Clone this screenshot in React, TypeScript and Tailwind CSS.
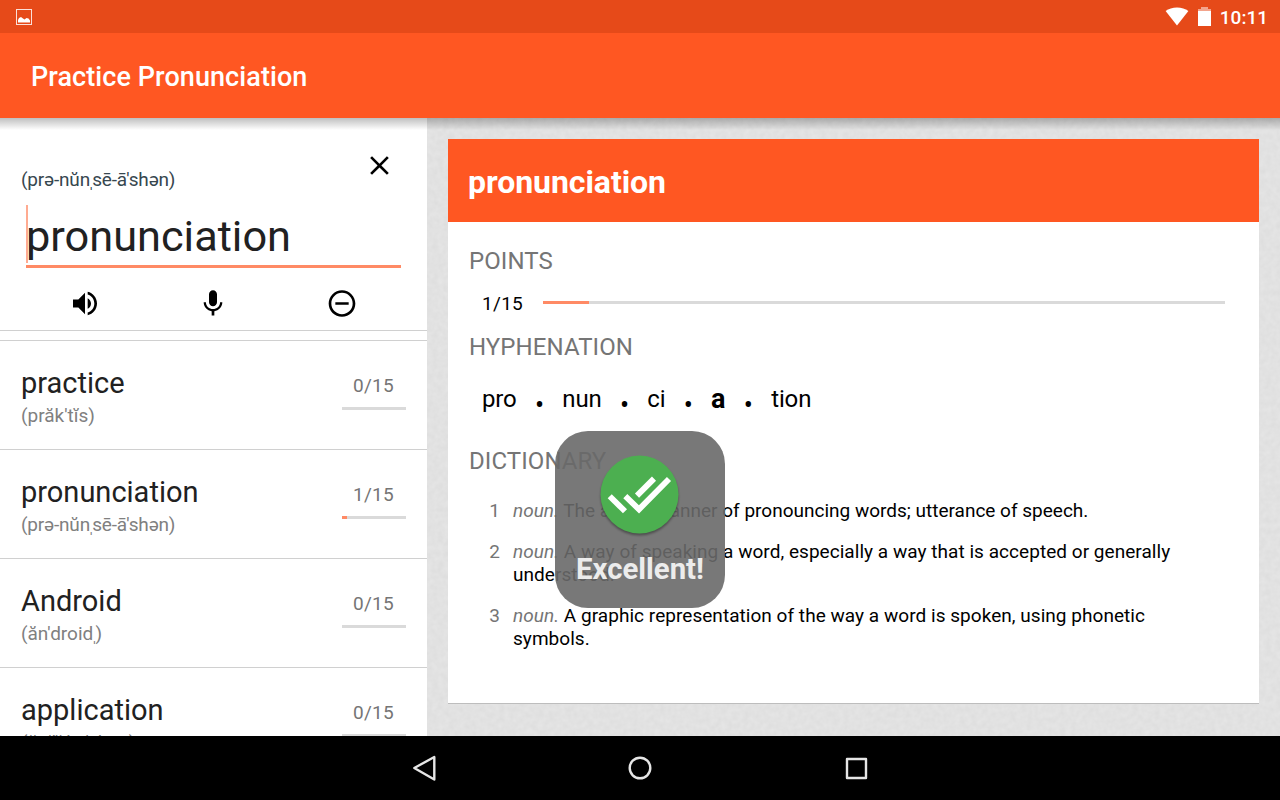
import React from "react";

type Word = { word: string; phonetic: string; points: number };

const MAX_POINTS = 15;

const words: Word[] = [
  { word: "practice", phonetic: "(prăk'tĭs)", points: 0 },
  { word: "pronunciation", phonetic: "(prə-nŭnˌsē-ā'shən)", points: 1 },
  { word: "Android", phonetic: "(ăn'droidˌ)", points: 0 },
  { word: "application", phonetic: "(ăp'lĭ-kā'shən)", points: 0 },
];

const syllables = [
  { text: "pro", stressed: false },
  { text: "nun", stressed: false },
  { text: "ci", stressed: false },
  { text: "a", stressed: true },
  { text: "tion", stressed: false },
];

const definitions = [
  "The act or manner of pronouncing words; utterance of speech.",
  "A way of speaking a word, especially a way that is accepted or generally understood.",
  "A graphic representation of the way a word is spoken, using phonetic symbols.",
];

function MaterialIcon({ d }: { d: string }) {
  return (
    <svg viewBox="0 0 24 24" className="h-8 w-8" fill="#000">
      <path d={d} />
    </svg>
  );
}

// The secondary stress mark hangs tightly under the letter before it.
function Phonetic({ text }: { text: string }) {
  const [before, after] = text.split("ˌ");
  if (after === undefined) return <>{before}</>;
  return (
    <span className={after.length > 3 ? "tracking-[-0.17px]" : ""}>
      {before}
      <span className="-ml-[2px] -mr-[2px]">ˌ</span>
      {after}
    </span>
  );
}

function StatusBar() {
  return (
    <div className="flex h-[33px] items-center bg-[#e64a19] pl-4 pr-3 text-white">
      <svg width="16" height="16" viewBox="0 0 16 16">
        <rect x="0.5" y="0.5" width="15" height="15" fill="none" stroke="#fbe0d8" />
        <path d="M2 13.500V11l1-2 2-1 2 1.500 1.500 1 2-1.500 2 .5 1.500 2v2z" fill="#fff" />
      </svg>
      <svg className="ml-auto" width="24" height="20" viewBox="0 0 24 20">
        <path d="M12 18.500.6 4.100C3.700 1.700 7.500.5 12 .5s8.300 1.200 11.400 3.600z" fill="#fff" />
      </svg>
      <svg className="ml-[9px]" width="13" height="19" viewBox="0 0 13 19">
        <path d="M3 0h7v2h3v2H0V2h3z" fill="#f3a48c" />
        <path d="M0 4h13v15H0z" fill="#fff" />
      </svg>
      <span className="ml-[9px] pt-[2px] text-[19px] font-medium leading-6">10:11</span>
    </div>
  );
}

function Header() {
  return (
    <header className="relative z-10 shrink-0 bg-[#ff5722]">
      <StatusBar />
      <div className="flex h-[85px] items-center pl-[31px] pt-[3px]">
        <h1 className="text-[27px] font-medium leading-8 tracking-[0.08px] text-white">Practice Pronunciation</h1>
      </div>
      <div className="absolute inset-x-0 top-full h-3 bg-linear-to-b from-black/25 to-transparent" />
    </header>
  );
}

function Editor() {
  return (
    <section className="h-[213px] shrink-0 border-b border-[#d0d0d0] px-[21px]">
      <div className="flex justify-between pt-[31px] pr-[10px]">
        <p className="pt-[19px] text-[19px] leading-6 text-[#37474f]">
          <Phonetic text="(prə-nŭnˌsē-ā'shən)" />
        </p>
        <svg viewBox="0.4 -0.4 24 24" className="h-8 w-8" fill="#000">
          <path d="M19 6.410 17.590 5 12 10.590 6.410 5 5 6.410 10.590 12 5 17.590 6.410 19 12 13.410 17.590 19 19 17.590 13.410 12z" />
        </svg>
      </div>
      <div className="ml-[5px] mt-[13px] flex h-[63px] w-[375px] border-b-3 border-[#ff8a65]">
        <div className="h-[58px] w-[2px] bg-[#ffab91]" />
        <div className="-ml-[2px] pt-px text-[43.300px] leading-[62px] text-[#212121]">pronunciation</div>
      </div>
      <div className="mt-[19px] grid w-[385px] translate-y-[0.5px] grid-cols-3 justify-items-center">
        <MaterialIcon d="M3 9v6h4l5 5V4L7 9H3zm13.500 3c0-1.770-1.020-3.290-2.500-4.030v8.050c1.480-.73 2.500-2.250 2.500-4.020zM14 3.230v2.060c2.890.86 5 3.540 5 6.710s-2.110 5.850-5 6.710v2.060c4.010-.91 7-4.490 7-8.770s-2.990-7.860-7-8.770z" />
        <MaterialIcon d="M12 14c1.660 0 2.990-1.340 2.990-3L15 5c0-1.660-1.340-3-3-3S9 3.340 9 5v6c0 1.660 1.340 3 3 3zm5.300-3c0 3-2.540 5.100-5.300 5.100S6.700 14 6.700 11H5c0 3.410 2.720 6.230 6 6.720V21h2v-3.280c3.280-.48 6-3.300 6-6.720h-1.700z" />
        <MaterialIcon d="M7 11v2h10v-2H7zm5-9C6.480 2 2 6.480 2 12s4.480 10 10 10 10-4.480 10-10S17.520 2 12 2zm0 18c-4.410 0-8-3.590-8-8s3.590-8 8-8 8 3.590 8 8-3.590 8-8 8z" />
      </div>
    </section>
  );
}

function WordRow({ word, phonetic, points }: Word) {
  return (
    <li className="flex h-[109px] shrink-0 justify-between border-t border-[#d0d0d0] pl-[21px] pr-[21px]">
      <div className="pt-[25px]">
        <p className="text-[29px] leading-[34px] text-[#212121]">{word}</p>
        <p className="mt-[5px] text-[19px] leading-[22px] text-[#808080]">
          <Phonetic text={phonetic} />
        </p>
      </div>
      <div className="w-16 pt-[33px] text-center">
        <p className="-ml-px text-[19px] leading-6 tracking-[0.3px] text-[#757575]">{points}/{MAX_POINTS}</p>
        <div className="mt-[9px] h-[3px] bg-[#dadada]">
          <div className="h-full bg-[#ff8a65]" style={{ width: `${(points / MAX_POINTS) * 115}%` }} />
        </div>
      </div>
    </li>
  );
}

function PaperTexture() {
  return (
    <svg className="absolute inset-0 h-full w-full">
      <filter id="paper">
        <feTurbulence type="fractalNoise" baseFrequency="0.18" numOctaves="2" seed="4" />
        <feColorMatrix values="0 0 0 0 0  0 0 0 0 0  0 0 0 0 0  0.045 0 0 0 -0.003" />
      </filter>
      <rect width="100%" height="100%" filter="url(#paper)" />
    </svg>
  );
}

function SectionTitle({ children }: { children: React.ReactNode }) {
  return <h3 className="text-[24px] leading-7 tracking-[0.08px] text-[#757575]">{children}</h3>;
}

function WordCard() {
  return (
    <article className="relative h-[565px] border-b border-[#bdbdbd] bg-white">
      <h2 className="flex h-[83px] items-center bg-[#ff5722] pl-[20px] pt-[3px] text-[32px] font-bold leading-10 tracking-[-0.05px] text-white">
        pronunciation
      </h2>
      <div className="pl-[21px] pr-[34px] pt-[25px]">
        <SectionTitle>POINTS</SectionTitle>
        <div className="mt-[16px] flex h-6 items-center pl-[13px]">
          <span className="w-[61px] pt-[2px] text-[19px] leading-6 tracking-[0.3px] text-black">1/{MAX_POINTS}</span>
          <div className="mb-[2px] h-[3px] flex-1 bg-[#dadada]">
            <div className="h-full w-[46px] bg-[#ff8a65]" />
          </div>
        </div>
        <div className="mt-[18px]">
          <SectionTitle>HYPHENATION</SectionTitle>
        </div>
        <div className="mt-[24px] flex h-7 pl-[13px] text-[24px] leading-7 text-black">
          {syllables.map((s, i) => (
            <React.Fragment key={s.text}>
              {i > 0 && <span className="w-[45.700px] pt-[6px] text-center text-[27px] leading-7">•</span>}
              <span className={s.stressed ? "text-[27px] font-bold" : "tracking-[-0.15px]"}>{s.text}</span>
            </React.Fragment>
          ))}
        </div>
        <div className="mt-[34px]">
          <SectionTitle>DICTIONARY</SectionTitle>
        </div>
        <ol className="mt-[24px] flex flex-col gap-[18px] text-[19px] leading-[23px] text-black">
          {definitions.map((d, i) => (
            <li key={d} className={i === 0 ? "flex" : "flex tracking-[0.04px]"}>
              <span className="w-[31px] text-right text-[#757575]">{i + 1}</span>
              <p className="ml-[13px] w-[680px]">
                <i className="text-[#757575]">noun.</i> {d}
              </p>
            </li>
          ))}
        </ol>
      </div>
    </article>
  );
}

function ResultToast() {
  return (
    <div className="absolute left-[555px] top-[431px] z-20 flex h-[177px] w-[170px] flex-col items-center rounded-[33px] bg-[#696969]/90 pt-[24px]">
      <svg width="86" height="86" viewBox="0 0 86 86" className="drop-shadow-[0_2px_1px_rgba(0,0,0,0.35)]">
        <circle cx="42.500" cy="39.500" r="39" fill="#4caf50" />
        <g fill="none" stroke="#fff" strokeWidth="5.800">
          <path d="M12.700 41.200 28 56.300" />
          <path d="M28.300 41.200 42 54.400 72 24" />
          <path d="M40 40.600 57 23.600" />
        </g>
      </svg>
      <p className="mt-[11px] text-[29.330px] font-bold leading-[34px] text-[#ececec]">Excellent!</p>
    </div>
  );
}

function NavigationBar() {
  return (
    <nav className="flex h-16 shrink-0 items-center justify-center gap-[184px] bg-black">
      <svg width="32" height="32" viewBox="0 0 32 32" fill="none" stroke="#e6e6e6" strokeWidth="2.400" strokeLinejoin="round">
        <path d="M6.300 16 26.300 5v22.500z" />
      </svg>
      <svg width="32" height="32" viewBox="0 0 32 32" fill="none" stroke="#e6e6e6" strokeWidth="2.400">
        <circle cx="16" cy="16" r="10.300" />
      </svg>
      <svg width="32" height="32" viewBox="0 0 32 32" fill="none" stroke="#e6e6e6" strokeWidth="2.400" strokeLinejoin="round">
        <rect x="7" y="7" width="19" height="19" />
      </svg>
    </nav>
  );
}

export default function App() {
  return (
    <div className="relative flex h-[800px] w-[1280px] flex-col overflow-hidden bg-white font-['Roboto',sans-serif]">
      <Header />
      <main className="flex min-h-0 flex-1">
        <aside className="flex w-[427px] shrink-0 flex-col overflow-hidden bg-white">
          <Editor />
          <ul className="mt-[9px] flex min-h-0 flex-1 flex-col overflow-hidden">
            {words.map((w) => (
              <WordRow key={w.word} {...w} />
            ))}
          </ul>
        </aside>
        <div className="relative flex-1 bg-[#e6e6e6] pl-[21px] pr-[21px] pt-[21px]">
          <PaperTexture />
          <WordCard />
        </div>
      </main>
      <ResultToast />
      <NavigationBar />
    </div>
  );
}
